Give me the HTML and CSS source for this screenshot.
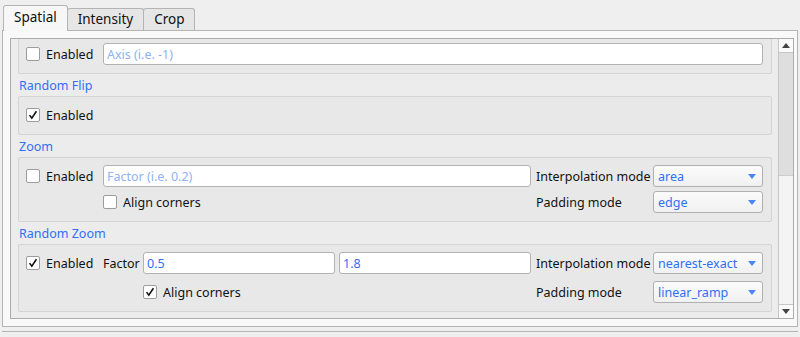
FILE: index.html
```html
<!DOCTYPE html>
<html lang="en">
<head>
  <meta charset="UTF-8">
  <title>Transforms</title>
  <meta name="viewport" content="width=device-width, initial-scale=1.0">
  <link rel="stylesheet" href="styles.css">
</head>
<body>
  <div class="tabbar">
    <div class="tab active">Spatial</div>
    <div class="tab">Intensity</div>
    <div class="tab">Crop</div>
  </div>

  <div class="pane">
    <div class="scroll">
      <div class="viewport">
        <div class="content">

          <div class="group first">
            <label class="check-label"><span class="check"></span>Enabled</label>
            <input class="field wide" placeholder="Axis (i.e. -1)">
          </div>

          <div class="heading">Random Flip</div>
          <div class="group">
            <label class="check-label"><span class="check on"><svg viewBox="0 0 13 13"><path d="M2.8 6.6 L5.2 10 L10.2 2.4"/></svg></span>Enabled</label>
          </div>

          <div class="heading">Zoom</div>
          <div class="group tight">
            <label class="check-label"><span class="check"></span>Enabled</label>
            <input class="field" placeholder="Factor (i.e. 0.2)">
            <span class="label">Interpolation mode</span>
            <div class="combo"><span>area</span><svg viewBox="0 0 8 5"><path d="M0 0 H8 L4 5 Z"/></svg></div>

            <span></span>
            <label class="check-label"><span class="check"></span>Align corners</label>
            <span class="label">Padding mode</span>
            <div class="combo"><span>edge</span><svg viewBox="0 0 8 5"><path d="M0 0 H8 L4 5 Z"/></svg></div>
          </div>

          <div class="heading">Random Zoom</div>
          <div class="group loose">
            <label class="check-label"><span class="check on"><svg viewBox="0 0 13 13"><path d="M2.8 6.6 L5.2 10 L10.2 2.4"/></svg></span>Enabled</label>
            <div class="factor">
              <span class="factor-label">Factor</span>
              <input class="field" value="0.5">
              <input class="field" value="1.8">
            </div>
            <span class="label">Interpolation mode</span>
            <div class="combo"><span>nearest-exact</span><svg viewBox="0 0 8 5"><path d="M0 0 H8 L4 5 Z"/></svg></div>

            <span></span>
            <label class="check-label indent"><span class="check on"><svg viewBox="0 0 13 13"><path d="M2.8 6.6 L5.2 10 L10.2 2.4"/></svg></span>Align corners</label>
            <span class="label">Padding mode</span>
            <div class="combo"><span>linear_ramp</span><svg viewBox="0 0 8 5"><path d="M0 0 H8 L4 5 Z"/></svg></div>
          </div>

        </div>
      </div>

      <div class="scrollbar">
        <div class="arrow"><svg viewBox="0 0 8 5"><path d="M0 5 H8 L4 0 Z"/></svg></div>
        <div class="thumb"></div>
        <div class="track"></div>
        <div class="arrow down"><svg viewBox="0 0 8 5"><path d="M0 0 H8 L4 5 Z"/></svg></div>
      </div>
    </div>
  </div>

  <div class="statusline"></div>
</body>
</html>
```

FILE: styles.css
```css
body {
  margin: 0;
  background: #efefef;
  color: #111;
  font-family: "Noto Sans", "Open Sans", sans-serif;
  font-size: 12.5px;
  overflow: hidden;
}
.tabbar {
  display: flex;
  align-items: flex-end;
  height: 30px;
  padding-left: 3px;
}
.tab {
  height: 21px;
  line-height: 20px;
  padding: 0 10px;
  border: 1px solid #b4b4b4;
  border-bottom: none;
  border-radius: 3px 3px 0 0;
  background: #e6e6e6;
  margin-left: -1px;
  font-size: 13.5px;
}
.tab:first-child {
  margin-left: 0;
}
.tab.active {
  position: relative;
  z-index: 1;
  height: 25px;
  line-height: 23px;
  margin-bottom: -1px;
  background: #f7f7f7;
}
.pane {
  margin: 0 2px;
  height: 281px;
  padding: 7px 3px 7px 7px;
  border: 1px solid #b4b4b4;
  background: #f9f9f9;
}
.scroll {
  display: flex;
  height: 279px;
  border: 1px solid #acacac;
  background: #ececec;
}
.viewport {
  flex: 1;
  overflow: hidden;
}
.content {
  padding: 0 6px 0 7px;
}
.group {
  display: grid;
  grid-template-columns: 72px 1fr 112px 110px;
  grid-auto-rows: 22px;
  column-gap: 5px;
  row-gap: 5px;
  padding: 7px 8px 8px 7px;
  border: 1px solid #d4d4d4;
  border-radius: 2px;
  background: #e8e8e8;
}
.group.first {
  margin-top: -4px;
}
.group.tight {
  row-gap: 4px;
}
.group.loose {
  row-gap: 7px;
}
.heading {
  margin: 3px 0 1px;
  padding-left: 1px;
  line-height: 18px;
  color: #2f6ff6;
}
.check-label {
  display: flex;
  align-items: center;
  gap: 6px;
  white-space: nowrap;
}
.check-label.indent {
  padding-left: 40px;
}
.check {
  display: inline-block;
  flex: none;
  width: 12px;
  height: 12px;
  border: 1px solid #9c9c9c;
  border-radius: 2px;
  background: #fff;
}
.check svg {
  display: block;
  width: 12px;
  height: 12px;
  fill: none;
  stroke: #111;
  stroke-width: 1.7;
}
.field {
  box-sizing: border-box;
  width: 100%;
  min-width: 0;
  height: 22px;
  margin: 0;
  padding: 0 3px;
  border: 1px solid #b2b2b2;
  border-radius: 3px;
  background: #fff;
  color: #2f6ff6;
  font: inherit;
  outline: none;
}
.field::placeholder {
  color: #8eb2f6;
}
.field.wide {
  grid-column: 2 / -1;
}
.factor {
  display: flex;
  align-items: center;
  gap: 4px;
}
.factor-label {
  flex: none;
  width: 36px;
}
.label {
  align-self: center;
  white-space: nowrap;
}
.combo {
  display: flex;
  align-items: center;
  justify-content: space-between;
  padding: 0 6px 0 4px;
  border: 1px solid #b0b0b0;
  border-radius: 3px;
  background: linear-gradient(#fbfbfb, #f1f1f1);
  color: #2f6ff6;
}
.combo svg {
  width: 8px;
  height: 5px;
  fill: #4a86f4;
}
.scrollbar {
  display: flex;
  flex-direction: column;
  width: 14px;
  border-left: 1px solid #c6c6c6;
  background: #f4f4f4;
}
.arrow {
  display: flex;
  align-items: center;
  justify-content: center;
  height: 13px;
  border-bottom: 1px solid #c6c6c6;
  background: #fafafa;
}
.arrow.down {
  border-bottom: none;
  border-top: 1px solid #c6c6c6;
}
.arrow svg {
  width: 8px;
  height: 5px;
  fill: #444;
}
.thumb {
  height: 122px;
  border-bottom: 1px solid #cdcdcd;
  background: #dedede;
}
.track {
  flex: 1;
}
.statusline {
  margin: 4px 2px 0;
  border-top: 1px solid #b4b4b4;
}
```
